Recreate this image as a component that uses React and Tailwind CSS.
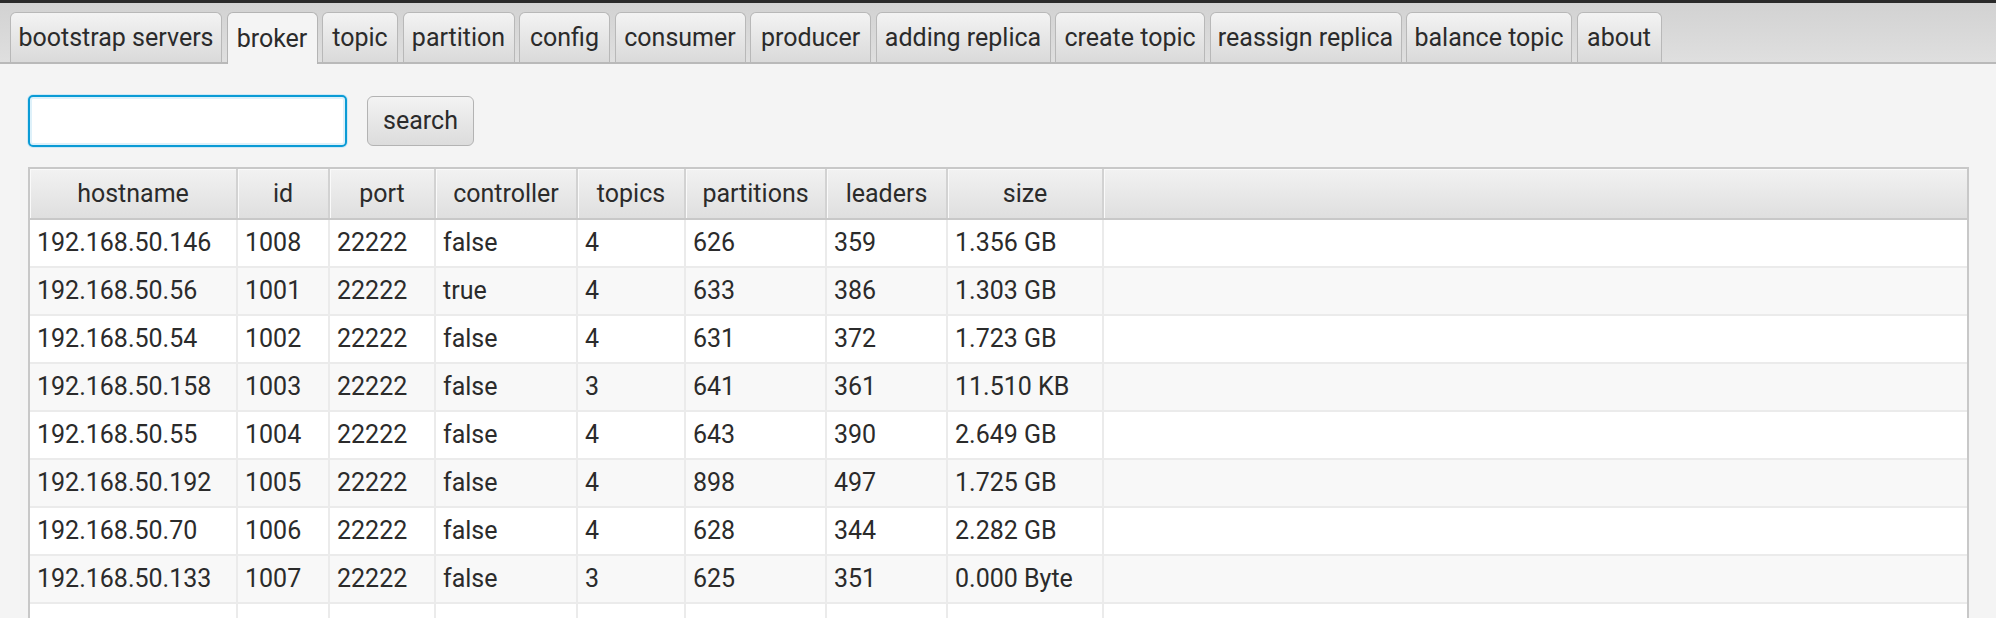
import React from 'react'

const tabs = [
  { label: 'bootstrap servers', w: 'w-[212px]' },
  { label: 'broker', w: 'w-[91px]', active: true },
  { label: 'topic', w: 'w-[76px]' },
  { label: 'partition', w: 'w-[112px]' },
  { label: 'config', w: 'w-[91px]' },
  { label: 'consumer', w: 'w-[131px]' },
  { label: 'producer', w: 'w-[121px]' },
  { label: 'adding replica', w: 'w-[175px]' },
  { label: 'create topic', w: 'w-[150px]' },
  { label: 'reassign replica', w: 'w-[192px]' },
  { label: 'balance topic', w: 'w-[166px]' },
  { label: 'about', w: 'w-[85px]' },
]

const columns = [
  { key: 'hostname', w: 'w-[208px]' },
  { key: 'id', w: 'w-[92px]' },
  { key: 'port', w: 'w-[106px]' },
  { key: 'controller', w: 'w-[142px]' },
  { key: 'topics', w: 'w-[108px]' },
  { key: 'partitions', w: 'w-[141px]' },
  { key: 'leaders', w: 'w-[121px]' },
  { key: 'size', w: 'w-[156px]' },
]

const brokers = [
  ['192.168.50.146', '1008', '22222', 'false', '4', '626', '359', '1.356 GB'],
  ['192.168.50.56', '1001', '22222', 'true', '4', '633', '386', '1.303 GB'],
  ['192.168.50.54', '1002', '22222', 'false', '4', '631', '372', '1.723 GB'],
  ['192.168.50.158', '1003', '22222', 'false', '3', '641', '361', '11.510 KB'],
  ['192.168.50.55', '1004', '22222', 'false', '4', '643', '390', '2.649 GB'],
  ['192.168.50.192', '1005', '22222', 'false', '4', '898', '497', '1.725 GB'],
  ['192.168.50.70', '1006', '22222', 'false', '4', '628', '344', '2.282 GB'],
  ['192.168.50.133', '1007', '22222', 'false', '3', '625', '351', '0.000 Byte'],
  ['', '', '', '', '', '', '', ''],
]

function Tab({ label, w, active }) {
  return (
    <div
      className={
        active
          ? `${w} h-[52px] -mb-[2px] flex items-center justify-center rounded-t-[6px] border-[1.5px] border-b-0 border-[#b4b4b4] bg-[#f4f4f4]`
          : `${w} h-[50px] flex items-center justify-center rounded-t-[6px] border-[1.5px] border-b-0 border-[#b8b8b8] bg-linear-to-b from-[#f3f3f3] to-[#dadada]`
      }
    >
      {label}
    </div>
  )
}

export default function App() {
  return (
    <div className="w-[1996px] h-[618px] overflow-hidden bg-[#f4f4f4] text-[#2b2b2b] text-[25px] font-['Roboto',sans-serif]">
      <div className="h-[3px] bg-[#2a2a2a]" />

      {/* tab strip */}
      <div className="h-[61px] pt-[10px] pl-[10px] flex items-end gap-[4.5px] bg-linear-to-b from-[#d2d2d2] to-[#dfdfdf] border-b-2 border-[#b9b9b9]">
        {tabs.map((t) => (
          <Tab key={t.label} {...t} />
        ))}
      </div>

      {/* search row */}
      <div className="flex items-center gap-[20px] pl-[28px] pt-[31px]">
        <input
          className="w-[319px] h-[52px] rounded-[5px] border-2 border-[#0a9bd5] bg-white px-3 outline-none shadow-[0_0_0_1px_#cfe9f6,inset_0_0_0_2px_#def1fa]"
        />
        <button className="w-[107px] h-[50px] rounded-[6px] border-[1.5px] border-[#b3b3b3] bg-linear-to-b from-[#f3f3f3] to-[#dcdcdc] text-[#2b2b2b]">
          search
        </button>
      </div>

      {/* broker table */}
      <div className="mt-[20px] ml-[28px] w-[1941px] border-2 border-[#c8c8c8] bg-white">
        <div className="flex h-[51px] border-b-2 border-[#c8c8c8] bg-linear-to-b from-[#f2f2f2] to-[#dfdfdf]">
          {columns.map((c) => (
            <div
              key={c.key}
              className={`${c.w} flex items-center justify-center border-r-2 border-[#d2d2d2] shadow-[inset_1px_1px_0_#fafafa]`}
            >
              {c.key}
            </div>
          ))}
          <div className="flex-1 shadow-[inset_1px_1px_0_#fafafa]" />
        </div>

        {brokers.map((row, i) => (
          <div
            key={i}
            className={`flex h-[48px] border-b-2 border-[#ebebeb] ${i % 2 === 0 ? 'bg-white' : 'bg-[#f8f8f8]'}`}
          >
            {columns.map((c, j) => (
              <div key={c.key} className={`${c.w} flex items-center pl-[7px] border-r-2 border-[#ebebeb] whitespace-nowrap`}>
                {row[j]}
              </div>
            ))}
            <div className="flex-1" />
          </div>
        ))}
      </div>
    </div>
  )
}
